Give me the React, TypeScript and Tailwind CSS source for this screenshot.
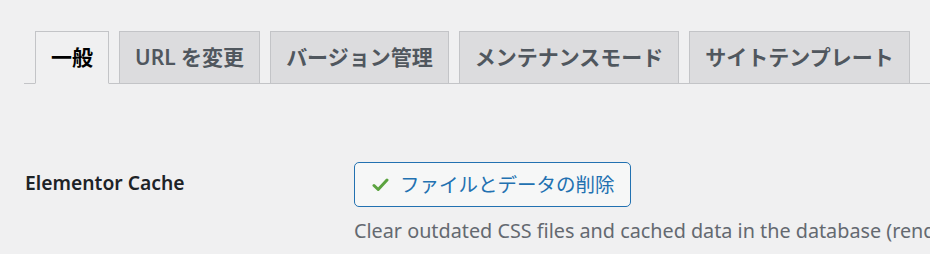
import { useState } from 'react';

const tabs = ['一般', 'URL を変更', 'バージョン管理', 'メンテナンスモード', 'サイトテンプレート'];

function CheckIcon() {
  return (
    <svg width="17" height="14" viewBox="0 0 17 14" className="shrink-0">
      <path d="M2 7.5 L6.2 11.5 L15 2" fill="none" stroke="#5ba33f" strokeWidth="3" strokeLinecap="round" strokeLinejoin="round" />
    </svg>
  );
}

export default function App() {
  const [active, setActive] = useState(0);

  return (
    <div
      className="min-h-screen bg-[#f0f0f1] pt-[31px] pl-[24px] overflow-hidden"
      style={{ fontFamily: '"Noto Sans", "Noto Sans CJK JP", sans-serif' }}
    >
      <nav className="flex gap-[10px] border-b border-[#c3c4c7] pl-[11px]">
        {tabs.map((tab, i) => (
          <button
            key={tab}
            onClick={() => setActive(i)}
            className={
              i === active
                ? 'h-[53px] -mb-px px-[15px] border border-[#c3c4c7] border-b-[#f0f0f1] bg-[#f0f0f1] text-[21px] font-semibold text-black whitespace-nowrap'
                : 'h-[53px] -mb-px px-[15px] border border-[#c3c4c7] bg-[#dcdcde] text-[21px] font-semibold text-[#50575e] whitespace-nowrap'
            }
          >
            {tab}
          </button>
        ))}
      </nav>

      <div className="flex pt-[78px]">
        <div className="w-[330px] shrink-0 flex items-center h-[43px] pl-px text-[19.3px] font-semibold text-[#1d2327]">
          Elementor Cache
        </div>
        <div className="flex flex-col items-start min-w-0">
          <button className="h-[45px] flex items-center gap-[11px] pl-[17px] pr-[15px] border border-[#2271b1] rounded-[5px] bg-[#f6f7f7] text-[19.5px] text-[#2271b1] whitespace-nowrap">
            <CheckIcon />
            ファイルとデータの削除
          </button>
          <p className="mt-[10px] text-[19.8px] leading-[28px] text-[#646970] whitespace-nowrap">
            Clear outdated CSS files and cached data in the database (rendered HTML, JS/CSS assets, etc.). We'll regenerate those files the next time you visit any page.
          </p>
        </div>
      </div>
    </div>
  );
}
